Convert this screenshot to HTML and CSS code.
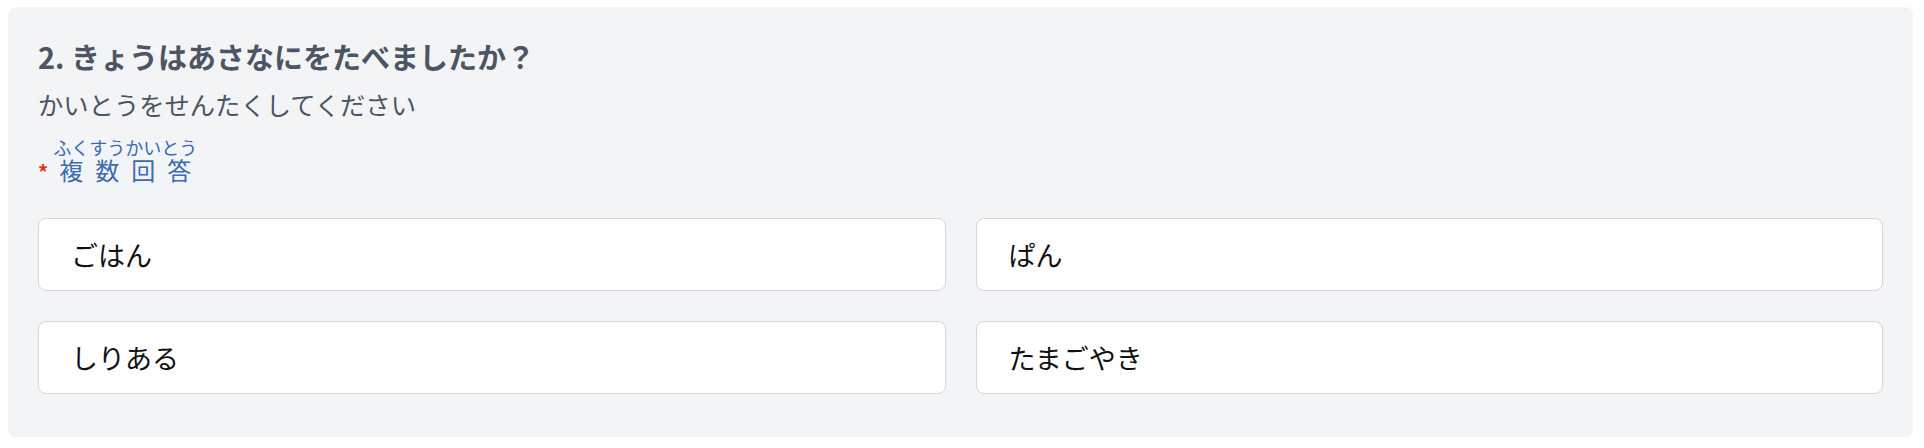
FILE: index.html
```html
<!DOCTYPE html>
<html lang="ja">
<head>
<meta charset="UTF-8">
<title>Question 2</title>
<link rel="stylesheet" href="styles.css">
</head>
<body>
  <div class="panel">
    <h2 class="q-title">2. きょうはあさなにをたべましたか？</h2>
    <p class="q-help">かいとうをせんたくしてください</p>
    <div class="q-kind">
      <span class="req">*</span>
      <span class="kind">
        <span class="kind-rt">ふくすうかいとう</span>
        <span class="kind-base"><span>複</span><span>数</span><span>回</span><span>答</span></span>
      </span>
    </div>
    <div class="choices">
      <div class="choice">ごはん</div>
      <div class="choice">ぱん</div>
      <div class="choice">しりある</div>
      <div class="choice">たまごやき</div>
    </div>
  </div>
</body>
</html>
```

FILE: styles.css
```css
body {
    margin: 0;
    font-family: "Noto Sans CJK JP", "Noto Sans", sans-serif;
    background-color: #ffffff;
}
.panel {
    margin: 7px 11px 0 8px;
    padding: 30px 30px 43px 30px;
    background-color: #f3f4f6;
    border-radius: 8px;
}
.q-title {
    margin: 0;
    font-size: 29px;
    line-height: 39px;
    font-weight: 700;
    color: #4b5563;
}
.q-help {
    margin: 10px 0 0 0;
    font-size: 25.3px;
    line-height: 37px;
    color: #4b5563;
}
.q-kind {
    display: flex;
    align-items: flex-end;
    gap: 5px;
    margin-top: 14px;
}
.req {
    color: #d93025;
    font-size: 20px;
    line-height: 22px;
    font-weight: 700;
}
.kind {
    display: inline-flex;
    flex-direction: column;
    color: #3a6ab3;
}
.kind-rt {
    font-size: 18px;
    line-height: 20px;
}
.kind-base {
    display: flex;
    justify-content: space-around;
    font-size: 24px;
    line-height: 26px;
}
.choices {
    display: grid;
    grid-template-columns: 1fr 1fr;
    gap: 30px;
    margin-top: 35px;
}
.choice {
    background-color: #ffffff;
    border: 1px solid #d1d5db;
    border-radius: 8px;
    padding: 15px 32px;
    font-size: 27px;
    line-height: 41px;
    color: #111111;
}
```
